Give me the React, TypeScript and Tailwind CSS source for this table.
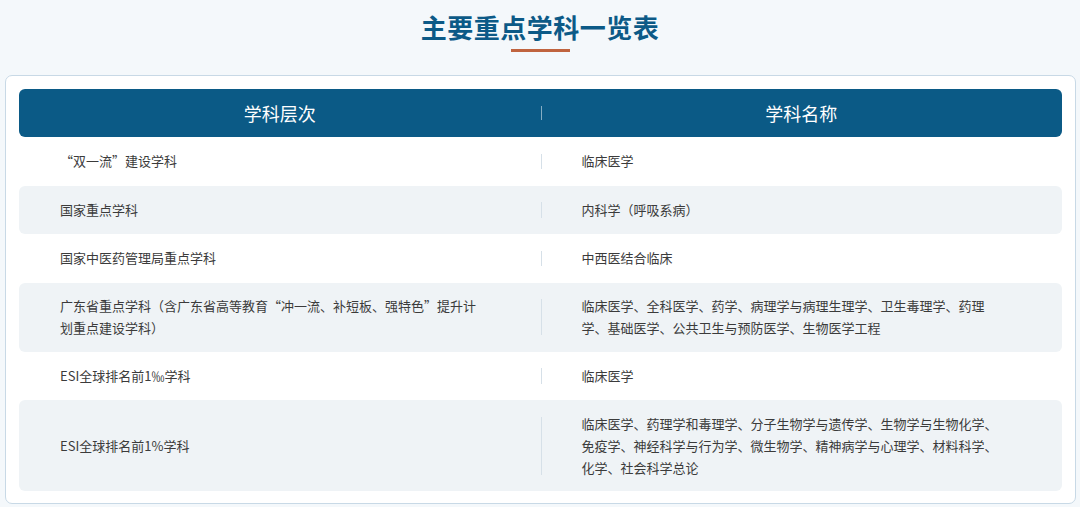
const rows = [
  { level: "“双一流”建设学科", names: "临床医学" },
  { level: "国家重点学科", names: "内科学（呼吸系病）" },
  { level: "国家中医药管理局重点学科", names: "中西医结合临床" },
  {
    level:
      "广东省重点学科（含广东省高等教育“冲一流、补短板、强特色”提升计划重点建设学科）",
    names:
      "临床医学、全科医学、药学、病理学与病理生理学、卫生毒理学、药理学、基础医学、公共卫生与预防医学、生物医学工程",
  },
  { level: "ESI全球排名前1‰学科", names: "临床医学" },
  {
    level: "ESI全球排名前1%学科",
    names:
      "临床医学、药理学和毒理学、分子生物学与遗传学、生物学与生物化学、免疫学、神经科学与行为学、微生物学、精神病学与心理学、材料科学、化学、社会科学总论",
  },
];

const App = () => {
  return (
    <div className="min-h-[507px] w-[1080px] bg-[#f4f8fb] font-['Noto_Sans_CJK_SC',sans-serif]">
      {/* title */}
      <div className="flex flex-col items-center pt-[11px]">
        <h1 className="text-[26px] leading-[32px] font-bold text-[#0c5a87] tracking-[0.5px]">
          主要重点学科一览表
        </h1>
        <div className="mt-[6px] w-[59px] h-[3px] bg-[#c0643f]" />
      </div>

      {/* card */}
      <div className="mt-[23px] mx-[5px] w-[1071px] rounded-[7px] border border-[#c8d9e6] bg-white px-[13px] pt-[13px] pb-[12px]">
        <div className="grid grid-cols-2 h-[48px] rounded-[6px] bg-[#0b5a86] text-white text-[18px]">
          <div className="flex items-center justify-center">学科层次</div>
          <div className="relative flex items-center justify-center">
            <span className="absolute left-0 top-[17px] h-[14px] w-px bg-white/50" />
            学科名称
          </div>
        </div>

        {rows.map((row, i) => (
          <div
            key={i}
            className={`grid grid-cols-2 min-h-[48.5px] py-[12.5px] rounded-[6px] text-[13px] leading-[22px] text-[#3b3b3b] ${
              i % 2 === 1 ? "bg-[#eff3f6]" : "bg-white"
            }`}
          >
            <div className="flex items-center pl-[41px] pr-[58px]">
              <p>{row.level}</p>
            </div>
            <div className="flex">
              <div className="w-px my-1 bg-[#d6e0e8] shrink-0" />
              <div className="flex items-center pl-[40px] pr-[59px]">
                <p>{row.names}</p>
              </div>
            </div>
          </div>
        ))}
      </div>
    </div>
  );
};

export default App;
